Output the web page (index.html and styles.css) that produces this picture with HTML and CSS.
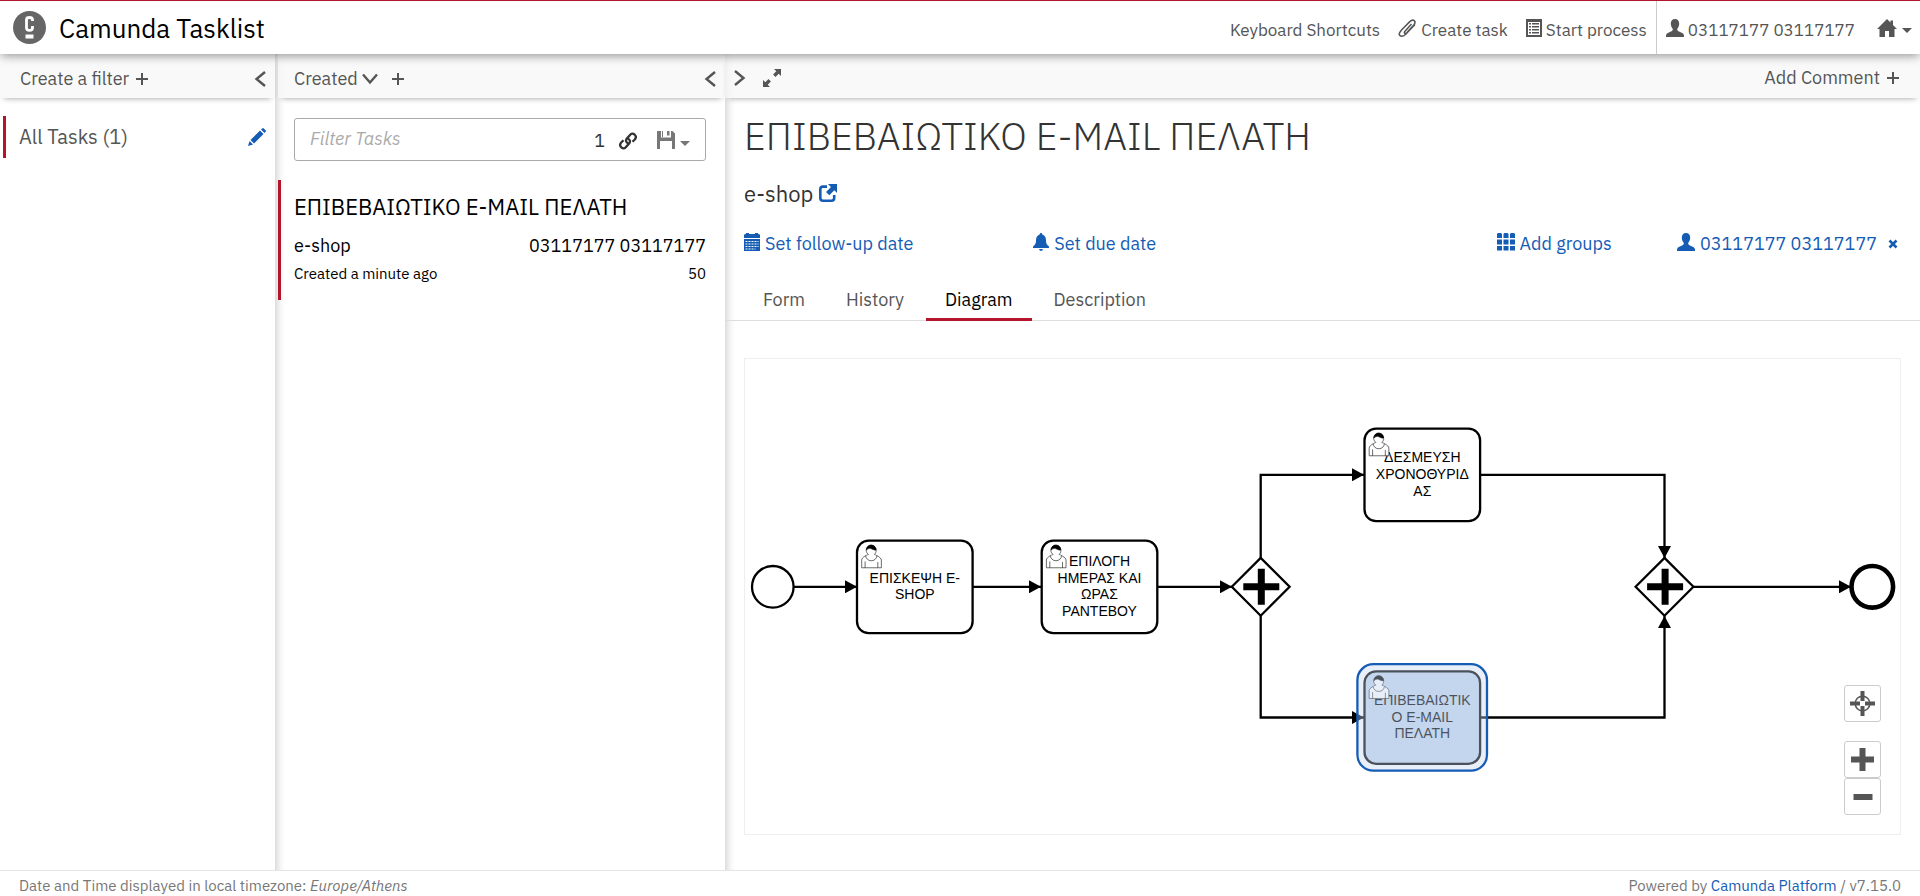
FILE: index.html
```html
<!DOCTYPE html>
<html lang="en">
<head>
<meta charset="utf-8">
<title>Camunda Tasklist</title>
<link rel="stylesheet" href="styles.css">
</head>
<body>
<svg class="defs" aria-hidden="true">
  <defs>
    <symbol id="i-user" viewBox="0 0 18 18"><path d="M9 0c2.600 0 4.200 1.800 4.200 4.600 0 2.200-.8 4-1.900 5.200-.4 1.300.2 2 1.700 2.700l3.200 1.500c1.200.6 1.800 1.500 1.800 2.800V18H0v-1.200c0-1.300.6-2.200 1.800-2.800L5 12.500c1.500-.7 2.100-1.400 1.700-2.700C5.600 8.600 4.800 6.800 4.800 4.600 4.800 1.800 6.400 0 9 0z"/></symbol>
    <symbol id="i-plus" viewBox="0 0 12 12"><path d="M5 0h2v5h5v2H7v5H5V7H0V5h5z"/></symbol>
    <symbol id="i-left" viewBox="0 0 12 16"><path d="M11 1L2.500 8 11 15" fill="none" stroke="currentColor" stroke-width="2.400"/></symbol>
    <symbol id="i-caret" viewBox="0 0 10 5"><path d="M0 0h10L5 5z"/></symbol>
    <symbol id="task-user" viewBox="0 0 24 26" overflow="visible">
      <path fill="#fff" d="m15 12c.909-.845 1.594-2.049 1.594-3.385 0-2.554-1.805-4.622-4.357-4.622-2.552 0-4.288 2.068-4.288 4.622 0 1.348.974 2.562 1.896 3.405-.529.187-5.669 2.097-5.794 4.756v6.718h17v-6.718c0-2.298-5.528-4.595-6.051-4.775zm-8 6v5.500m11 0v-5"/>
      <path fill="#fff" d="m17.162 13.009c0 2.447-2.158 4.431-4.821 4.431-2.665 0-4.822-1.981-4.822-4.431"/>
      <path fill="#000" d="m8.100 8.200c0 0 2.251-2.358 4.274-1.177 2.024 1.181 4.221 1.537 4.124.965-.098-.57-.117-3.791-4.191-4.136-3.572.001-4.208 3.367-4.207 4.348z"/>
    </symbol>
    <marker id="arrow" viewBox="0 0 12 13" refX="12" refY="6.500" markerWidth="12" markerHeight="13" markerUnits="userSpaceOnUse" orient="auto"><path d="M0 0L12 6.500L0 13z" fill="#000"/></marker>
  </defs>
</svg>

<header class="topbar">
  <a class="brand" href="#">
    <svg class="logo" viewBox="0 0 33 33"><circle cx="16.500" cy="16.500" r="16.500" fill="#666"/><path d="M19.500 10V8.500Q19.500 6.500 16.500 6.500T13.500 8.500V17Q13.500 19.300 16.500 19.300T19.500 17V15" fill="none" stroke="#fff" stroke-width="2.800"/><path d="M12.500 23.500h8v4h-8z" fill="#fff"/></svg>
    <span>Camunda Tasklist</span>
  </a>
  <nav class="actions">
    <a href="#">Keyboard Shortcuts</a>
    <a href="#"><svg class="icon clip" viewBox="0 0 19 18"><path d="M13.500 5L7 12.200Q5.800 13.600 6.700 14.300T9 13.600L15.800 6Q18 3.200 16.200 1.700T11.800 2.600L4 10.500Q-.2 15 2 16.600T7.500 15.500L17 5.500" fill="none" stroke="currentColor" stroke-width="1.500"/></svg>Create task</a>
    <a href="#"><svg class="icon narrow" viewBox="0 0 16 18"><path fill-rule="evenodd" d="M0 0h16v18H0zM2 3v13h12V3zM3 4h2v1.500H3zM6 4h7v1.500H6zM3 7h2v1.500H3zM6 7h7v1.500H6zM3 10h2v1.500H3zM6 10h7v1.500H6zM3 13h2v1.500H3zM6 13h7v1.500H6z"/></svg>Start process</a>
  </nav>
  <nav class="account">
    <a href="#"><svg class="icon"><use href="#i-user"/></svg>03117177 03117177</a>
    <button class="home" aria-label="Apps"><svg class="icon wide" viewBox="0 0 20 18"><path d="M10 0l3.500 3.500V1.500H16V6l4 4h-2.500v8H12v-6H8v6H2.500v-8H0z"/></svg><svg class="caret"><use href="#i-caret"/></svg></button>
  </nav>
</header>

<main class="columns">
  <section class="column filters">
    <div class="bar">
      <button>Create a filter<svg class="plus"><use href="#i-plus"/></svg></button>
      <button class="end" aria-label="Collapse filters"><svg class="chev"><use href="#i-left"/></svg></button>
    </div>
    <div class="filter">
      <a href="#">All Tasks (1)</a>
      <button aria-label="Edit filter"><svg class="icon" viewBox="0 0 18 18"><path d="M0 18l1.500-5 3.500 3.500zM2.500 12L12 2.500 15.500 6 6 15.500zM13 1.500L14.200.4q.8-.7 1.600 0l1.800 1.800q.7.8 0 1.600L16.500 5z"/></svg></button>
    </div>
  </section>

  <section class="column tasks">
    <div class="bar">
      <button>Created<svg class="down" viewBox="0 0 16 12"><path d="M1 1.500L8 9.500 15 1.500" fill="none" stroke="currentColor" stroke-width="2.400"/></svg></button>
      <button aria-label="Add sorting"><svg class="plus"><use href="#i-plus"/></svg></button>
      <button class="end" aria-label="Collapse tasks"><svg class="chev"><use href="#i-left"/></svg></button>
    </div>
    <div class="search">
      <input type="text" placeholder="Filter Tasks" aria-label="Filter Tasks">
      <span class="count">1</span>
      <button class="link" aria-label="Copy link"><svg class="icon" viewBox="0 0 18 18"><g fill="none" stroke="currentColor" stroke-width="2.300"><path d="M9.500 11.500Q6 10 7.500 7L11 3Q13 .5 15.700 2.700 18 5 15.800 7.500L13.500 9.800"/><path d="M8.500 6.500Q12 8 10.500 11L7 15Q5 17.500 2.300 15.300 0 13 2.200 10.500L4.500 8.200"/></g></svg></button>
      <button class="save" aria-label="Save filter"><svg class="icon" viewBox="0 0 18 18"><path fill-rule="evenodd" d="M0 0h4v6.500h10V0h1.500L18 2.500V18h-3V10H3v8H0zM10 0h2.500v4.500H10zM5 0h1v7H5z"/></svg><svg class="caret"><use href="#i-caret"/></svg></button>
    </div>
    <article class="task">
      <h4>ΕΠΙΒΕΒΑΙΩΤΙΚΟ E-MAIL ΠΕΛΑΤΗ</h4>
      <div class="line"><span>e-shop</span><span>03117177 03117177</span></div>
      <div class="line small"><span>Created a minute ago</span><span>50</span></div>
    </article>
  </section>

  <section class="column detail">
    <div class="bar">
      <button aria-label="Expand"><svg class="chev flip"><use href="#i-left"/></svg></button>
      <button aria-label="Full screen"><svg class="icon" viewBox="0 0 18 18"><path d="M11 0h7v7l-2.300-2.300-3.200 3.200-2.400-2.400 3.200-3.200zM0 11l2.300 2.300 3.200-3.200 2.400 2.400-3.200 3.200L7 18H0z"/></svg></button>
      <button class="end">Add Comment<svg class="plus"><use href="#i-plus"/></svg></button>
    </div>
    <div class="summary">
      <h2>ΕΠΙΒΕΒΑΙΩΤΙΚΟ E-MAIL ΠΕΛΑΤΗ</h2>
      <h3>e-shop <a href="#" aria-label="Open process"><svg class="icon" viewBox="0 0 18 18"><path d="M9 0h9v9l-2.700-2.700-5 5-3.300-3.300 5-5z"/><path d="M8 2.600H4Q1.300 2.600 1.300 5.300V14Q1.300 16.700 4 16.700H12.500Q15.200 16.700 15.200 14V11" fill="none" stroke="currentColor" stroke-width="2.600"/></svg></a></h3>
      <div class="meta">
        <button><svg class="icon narrow" viewBox="0 0 16 18"><path fill-rule="evenodd" d="M2 1V0h3v1h6V0h3v1h1l1 1v3H0V2l1-1zM0 6h16v12H0z"/><path d="M1.500 8.500h13M1.500 11h13M1.500 13.500h13M1.500 16h10" stroke="#fff" stroke-dasharray="2 1"/></svg>Set follow-up date</button>
        <button><svg class="icon narrow" viewBox="0 0 16 18"><path d="M8 0q1.300 0 1.400 1.400C12 2.300 13 4.500 13 7.500c0 3 .8 4.300 3 6V15H0v-1.500c2.200-1.700 3-3 3-6 0-3 1-5.200 3.600-6.100Q6.700 0 8 0zM6 16h4q-.5 2-2 2t-2-2z"/></svg>Set due date</button>
        <button class="right"><svg class="icon" viewBox="0 0 18 18"><path d="M1 0h3l1 1v4H0V1zM7.500 0h3l1 1v4h-5V1zM14 0h3l1 1v4h-5V1zM0 6.500h5v5H0zM6.500 6.500h5v5h-5zM13 6.500h5v5h-5zM0 13h5v4.500H0zM6.500 13h5v4.500h-5zM13 13h5v4.500h-5z"/></svg>Add groups</button>
        <div class="right assignee">
          <button><svg class="icon"><use href="#i-user"/></svg>03117177 03117177</button>
          <button aria-label="Reset assignee"><svg class="cross" viewBox="0 0 10 10"><path d="M1.500 1.500l7 7M8.500 1.500l-7 7" stroke="currentColor" stroke-width="2.600"/></svg></button>
        </div>
      </div>
    </div>
    <nav class="tabs">
      <a href="#">Form</a>
      <a href="#">History</a>
      <a class="active" href="#">Diagram</a>
      <a href="#">Description</a>
    </nav>
    <div class="diagram">
      <svg class="canvas" viewBox="745 359 1155 475">
        <g class="flow">
          <path d="M794 586.800H857"/>
          <path d="M973 586.800H1041"/>
          <path d="M1158 586.800H1232"/>
          <path d="M1260.700 558V474.800H1364"/>
          <path d="M1260.700 616V717.500H1364"/>
          <path d="M1480 474.800H1664.500V558"/>
          <path d="M1480 717.500H1664.500V616"/>
          <path d="M1693 586.800H1851"/>
        </g>
        <g class="shape">
          <circle cx="772.800" cy="586.800" r="20.800"/>
          <circle class="thick" cx="1872.300" cy="586.800" r="20.800"/>
          <rect x="857" y="540.600" width="115.600" height="92.500" rx="11.600"/>
          <rect x="1041.700" y="540.600" width="115.600" height="92.500" rx="11.600"/>
          <rect x="1364.500" y="428.600" width="115.600" height="92.500" rx="11.600"/>
          <rect class="current" x="1364.500" y="671.300" width="115.600" height="92.500" rx="11.600"/>
          <path d="M1231.800 586.800l28.900-28.900 28.900 28.900-28.900 28.900z"/>
          <path d="M1635.600 586.800l28.900-28.900 28.900 28.900-28.900 28.900z"/>
        </g>
        <path class="cross-mark" d="M1243.300 586.800h36M1261.300 568.800v36M1647.100 586.800h36M1665.100 568.800v36"/>
        <g class="label">
          <text x="914.800" y="583">ΕΠΙΣΚΕΨΗ E-</text><text x="914.800" y="599">SHOP</text>
          <text x="1099.500" y="566">ΕΠΙΛΟΓΗ</text><text x="1099.500" y="583">ΗΜΕΡΑΣ ΚΑΙ</text><text x="1099.500" y="599">ΩΡΑΣ</text><text x="1099.500" y="616">ΡΑΝΤΕΒΟΥ</text>
          <text x="1422.300" y="462">ΔΕΣΜΕΥΣΗ</text><text x="1422.300" y="479">ΧΡΟΝΟΘΥΡΙΔ</text><text x="1422.300" y="496">ΑΣ</text>
          <text x="1422.300" y="705">ΕΠΙΒΕΒΑΙΩΤΙΚ</text><text x="1422.300" y="722">Ο E-MAIL</text><text x="1422.300" y="738">ΠΕΛΑΤΗ</text>
        </g>
        <g class="people">
          <use href="#task-user" x="857" y="540.600" width="27.760" height="30.070"/>
          <use href="#task-user" x="1041.700" y="540.600" width="27.760" height="30.070"/>
          <use href="#task-user" x="1364.500" y="428.600" width="27.760" height="30.070"/>
          <use href="#task-user" x="1364.500" y="671.300" width="27.760" height="30.070"/>
        </g>
        <rect class="highlight" x="1357.400" y="664.200" width="129.600" height="106.500" rx="16"/>
      </svg>
      <div class="zoom">
        <button class="reset" aria-label="Reset zoom"><svg viewBox="0 0 25 25"><circle cx="12.500" cy="12.500" r="7.300" fill="none" stroke="currentColor" stroke-width="1.500"/><path d="M10.500 0h4v10h-4zM10.500 15h4v10h-4zM0 10.500h10v4H0zM15 10.500h10v4H15z"/></svg></button>
        <button aria-label="Zoom in"><svg viewBox="0 0 25 25"><path d="M9.500 1h6v8.500H24v6h-8.500V24h-6v-8.500H1v-6h8.500z"/></svg></button>
        <button aria-label="Zoom out"><svg viewBox="0 0 25 25"><path d="M3.500 10h19v6h-19z"/></svg></button>
      </div>
    </div>
  </section>
</main>

<footer class="footer">
  <span>Date and Time displayed in local timezone: <em>Europe/Athens</em></span>
  <span>Powered by <a href="#">Camunda Platform</a> / v7.15.0</span>
</footer>
</body>
</html>
```
FILE: styles.css
```css
* { box-sizing: border-box; }

body {
  margin: 0;
  min-height: 100vh;
  display: flex;
  flex-direction: column;
  font: 18px/24px "IBM Plex Sans", Roboto, "Noto Sans", sans-serif;
  color: #555;
  background: #fff;
}

a { color: inherit; text-decoration: none; }

button {
  display: inline-flex;
  align-items: center;
  padding: 0;
  border: 0;
  background: none;
  font: inherit;
  color: inherit;
}

svg { fill: currentColor; flex: none; }
.defs { position: absolute; width: 0; height: 0; }
.icon { width: 18px; height: 18px; }
.icon.narrow { width: 16px; }
.icon.wide { width: 20px; }
.plus { width: 12px; height: 12px; margin-left: 7px; }
.chev { width: 12px; height: 16px; }
.flip { transform: scaleX(-1); }
.caret { width: 10px; height: 5px; margin-left: 5px; }

.topbar {
  position: relative;
  z-index: 2;
  display: flex;
  align-items: stretch;
  height: 54px;
  border-top: 1px solid #b5152b;
  background: #fff;
  box-shadow: 0 3px 9px -1px rgba(0, 0, 0, .4);
}
.brand {
  display: flex;
  align-items: center;
  gap: 13px;
  padding-left: 13px;
  margin-right: auto;
  font-size: 26px;
  color: #000;
}
.logo { width: 33px; height: 33px; }
.actions, .account { display: flex; align-items: center; padding-top: 4px; font-size: 17px; }
.actions { gap: 18px; padding-right: 9px; }
.actions a, .account a { display: flex; align-items: center; gap: 4px; }
.actions .icon, .account .icon { margin-bottom: 4px; }
.icon.clip { width: 19px; }
.account {
  gap: 22px;
  padding: 4px 8px 0 9px;
  border-left: 1px solid #ccc;
}

.columns {
  flex: 1;
  display: grid;
  grid-template-columns: 275px 450px 1fr;
}
.column { display: flex; flex-direction: column; min-width: 0; }
.tasks, .detail { box-shadow: inset 10px 0 9px -8px rgba(0, 0, 0, .2); }
.bar {
  display: flex;
  align-items: center;
  height: 44px;
  padding: 6px 9px 0 20px;
  background: rgba(247, 247, 247, .75);
  box-shadow: 0 4px 6px -4px rgba(0, 0, 0, .4);
}
.bar .end { margin-left: auto; }
.tasks .bar { margin-left: 3px; padding-left: 16px; gap: 7px; }
.down { width: 16px; height: 12px; margin-left: 4px; }
.detail .bar { padding: 4px 21px 0 9px; gap: 17px; }

.filter {
  display: flex;
  align-items: center;
  justify-content: space-between;
  height: 42px;
  margin: 18px 9px 0 3px;
  padding-left: 13px;
  border-left: 3px solid #b5152b;
  font-size: 20px;
}
.filter button, .meta, h3 a, .footer a { color: #155cb5; }

.search {
  display: flex;
  align-items: center;
  height: 43px;
  margin: 20px 19px 0 19px;
  padding: 0 15px;
  border: 1px solid #aaa;
  border-radius: 3px;
  color: #333;
}
.search input {
  flex: 1;
  min-width: 0;
  padding: 0 0 2px;
  border: 0;
  font: inherit;
  background: none;
}
.search input::placeholder { color: #aaa; font-style: italic; }
.count { padding-top: 2px; }
.link { margin: 3px 20px 0 14px; }
.save { color: #777; }
.save .caret { margin-top: 7px; }
.home .caret { margin-top: 2px; }

.task {
  margin: 19px 0 0 3px;
  height: 120px;
  padding: 13px 19px 0 13px;
  border-left: 3px solid #b5152b;
  color: #000;
}
h2, h3, h4 { margin: 0; font-weight: 400; }
h4 { font-size: 22px; line-height: 28px; }
.line { display: flex; justify-content: space-between; margin-top: 13px; }
.small { margin-top: 4px; font-size: 15px; }

.summary { padding: 17px 19px 0; color: #333; }
h2 { font-size: 38px; line-height: 42px; font-weight: 300; }
h3 { margin-top: 23px; font-size: 22px; line-height: 28px; }
.meta { display: grid; grid-template-columns: repeat(4, 1fr); margin-top: 24px; }
.meta button { gap: 5px; }
.meta .icon { margin-bottom: 4px; }
.right { justify-self: end; }
.assignee { display: flex; gap: 11px; padding-right: 3px; }
.cross { width: 10px; height: 10px; }

.tabs {
  display: flex;
  gap: 3px;
  margin-top: 26px;
  padding-left: 19px;
  border-bottom: 1px solid #ddd;
}
.tabs a { padding: 6px 19px; margin-bottom: -1px; border-bottom: 3px solid transparent; }
.tabs .active { color: #000; border-color: #b5152b; }

.diagram {
  position: relative;
  flex: 1;
  margin: 37px 19px 35px;
  border: 1px solid #eee;
}
.canvas { display: block; width: 100%; }
.flow { fill: none; stroke: #000; stroke-width: 2.3px; }
.flow path { marker-end: url(#arrow); }
.shape { fill: #fff; stroke: #000; stroke-width: 2.3px; }
.shape .thick { stroke-width: 4.6px; }
.shape .current { fill: #c3d6ee; }
.cross-mark { stroke: #000; stroke-width: 7px; }
.label { font: 14px "Liberation Sans", Arial, sans-serif; text-anchor: middle; fill: #000; }
.people { stroke: #000; stroke-width: .5px; }
.highlight { fill: rgba(195, 214, 238, .384); stroke: #155cb5; stroke-width: 2.3px; }

.zoom { position: absolute; right: 19px; bottom: 19px; display: flex; flex-direction: column; }
.zoom button {
  justify-content: center;
  width: 37px;
  height: 37px;
  border: 1px solid #ccc;
  border-radius: 3px;
  background: #fff;
}
.zoom svg { width: 25px; height: 25px; }
.zoom .reset { margin-bottom: 19px; }

.footer {
  display: flex;
  justify-content: space-between;
  padding: 5px 19px 0;
  border-top: 1px solid #e5e5e5;
  font-size: 15px;
  line-height: 20px;
  color: #777;
}
```
